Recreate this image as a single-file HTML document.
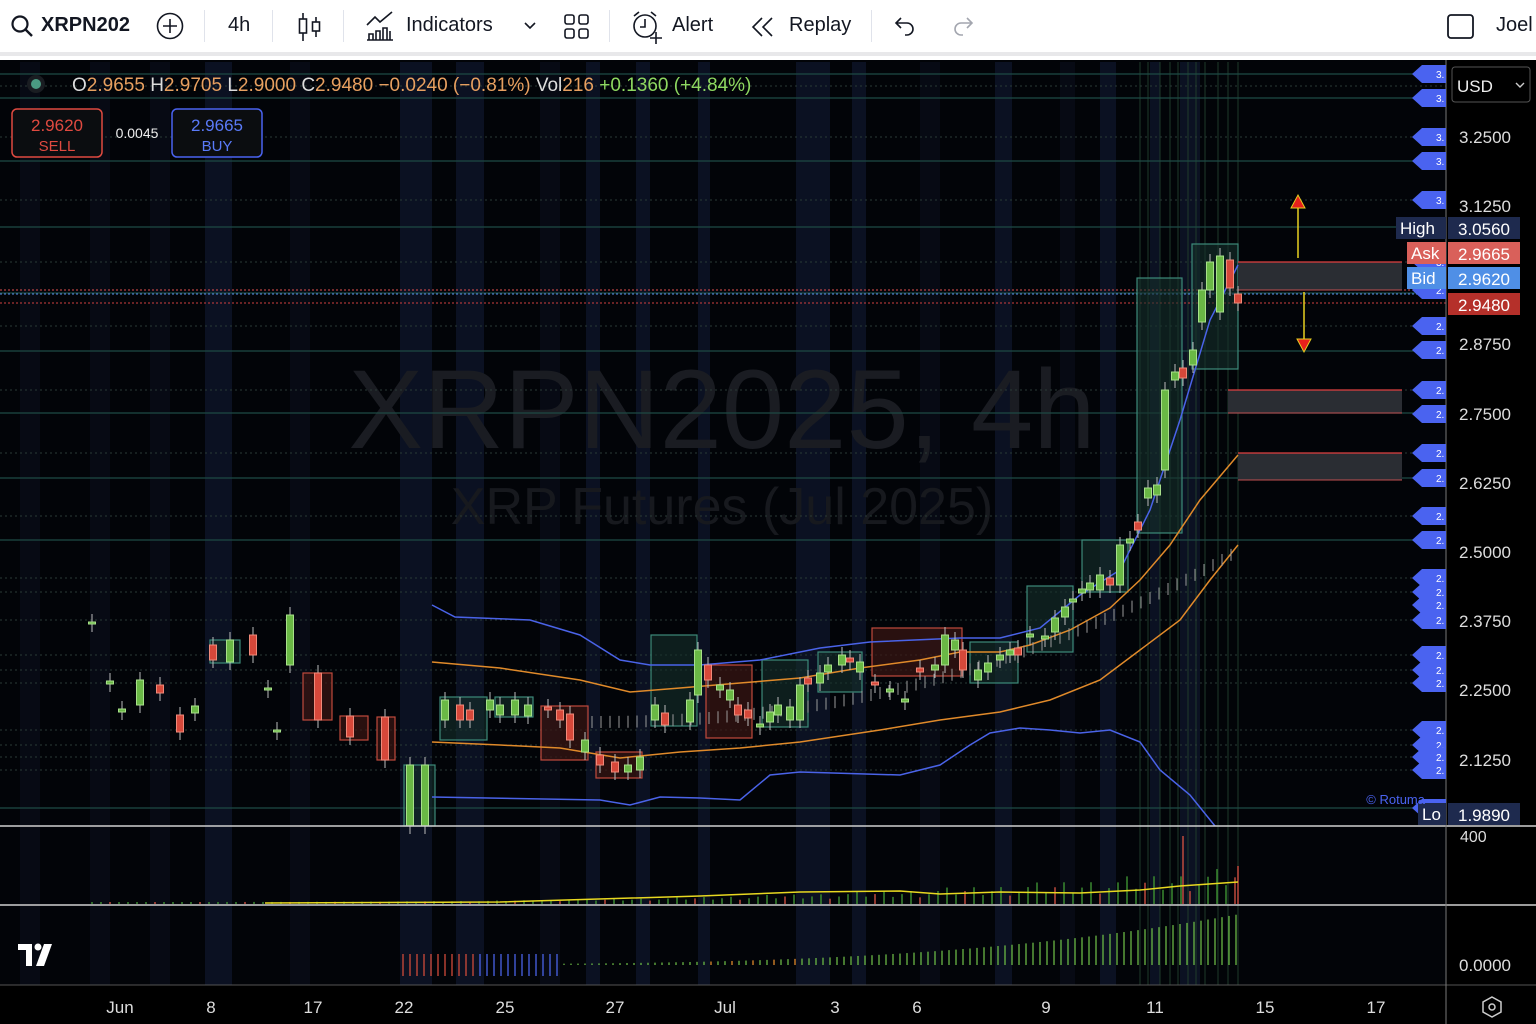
<!DOCTYPE html>
<html><head><meta charset="utf-8"><style>
*{margin:0;padding:0;box-sizing:border-box}
body{width:1536px;height:1024px;overflow:hidden;background:#fff;font-family:"Liberation Sans",sans-serif;position:relative}
.tb{position:absolute;left:0;top:0;width:1536px;height:56px;background:#fff;border-bottom:4px solid #e8e8ea}
.tb span{position:absolute;top:14px;font-size:20px;color:#131722}
.dv{position:absolute;top:10px;width:1px;height:32px;background:#e0e3eb}
#ch{position:absolute;left:0;top:60px}
.axl{font-family:"Liberation Sans",sans-serif}
</style></head><body>
<div class="tb">
<svg style="position:absolute;left:10px;top:14px" width="26" height="26" viewBox="0 0 26 26"><circle cx="10" cy="10" r="7.5" fill="none" stroke="#131722" stroke-width="2.2"/><path d="M15.5 15.5 22 22" stroke="#131722" stroke-width="2.4"/></svg>
<span style="left:41px;font-weight:bold">XRPN202</span>
<svg style="position:absolute;left:156px;top:12px" width="30" height="30"><circle cx="14" cy="14" r="12.5" fill="none" stroke="#131722" stroke-width="1.6"/><path d="M14 7v14M7 14h14" stroke="#131722" stroke-width="1.6"/></svg>
<div class="dv" style="left:204px"></div>
<span style="left:228px">4h</span>
<div class="dv" style="left:272px"></div>
<svg style="position:absolute;left:296px;top:11px" width="28" height="32"><path d="M7 2v28M20 6v20" stroke="#131722" stroke-width="1.6"/><rect x="3.5" y="8" width="7" height="14" fill="#fff" stroke="#131722" stroke-width="1.6"/><rect x="16.5" y="11" width="7" height="9" fill="#fff" stroke="#131722" stroke-width="1.6"/></svg>
<div class="dv" style="left:343px"></div>
<svg style="position:absolute;left:364px;top:11px" width="32" height="32"><path d="M3 14l8-8 5 5 12-10" fill="none" stroke="#131722" stroke-width="1.6"/><path d="M3 29h26M5 29v-6h4v6M12 29v-9h4v9M19 29v-12h4v12M26 29v-9" fill="none" stroke="#131722" stroke-width="1.6"/></svg>
<span style="left:406px">Indicators</span>
<svg style="position:absolute;left:523px;top:20px" width="14" height="12"><path d="M2 3l5 5 5-5" fill="none" stroke="#131722" stroke-width="1.6"/></svg>
<svg style="position:absolute;left:563px;top:13px" width="28" height="28"><rect x="2" y="2" width="9" height="9" rx="2" fill="none" stroke="#131722" stroke-width="1.6"/><rect x="16" y="2" width="9" height="9" rx="2" fill="none" stroke="#131722" stroke-width="1.6"/><rect x="2" y="16" width="9" height="9" rx="2" fill="none" stroke="#131722" stroke-width="1.6"/><rect x="16" y="16" width="9" height="9" rx="2" fill="none" stroke="#131722" stroke-width="1.6"/></svg>
<div class="dv" style="left:609px"></div>
<svg style="position:absolute;left:630px;top:10px" width="34" height="34"><circle cx="15" cy="16" r="11" fill="none" stroke="#131722" stroke-width="1.6"/><path d="M15 9v8h-5M4 6l5-4M26 6l-5-4M26 22v12M20 28h12" fill="none" stroke="#131722" stroke-width="1.6"/></svg>
<span style="left:672px">Alert</span>
<svg style="position:absolute;left:750px;top:15px" width="26" height="24"><path d="M12 3 3 12l9 9M22 3l-9 9 9 9" fill="none" stroke="#131722" stroke-width="1.6"/></svg>
<span style="left:789px">Replay</span>
<div class="dv" style="left:871px"></div>
<svg style="position:absolute;left:893px;top:14px" width="26" height="24"><path d="M8 4 3 9l5 5M3 9h11a6 6 0 0 1 0 12h-2" fill="none" stroke="#131722" stroke-width="1.6"/></svg>
<svg style="position:absolute;left:949px;top:14px" width="26" height="24"><path d="M18 4l5 5-5 5M23 9H12a6 6 0 0 0 0 12h2" fill="none" stroke="#a3a6af" stroke-width="1.6"/></svg>
<svg style="position:absolute;left:1446px;top:12px" width="30" height="30"><rect x="2" y="3" width="25" height="23" rx="3" fill="none" stroke="#131722" stroke-width="1.8"/></svg>
<span style="left:1496px">Joel</span>
</div>
<svg id="ch" width="1536" height="964" viewBox="0 60 1536 964" xmlns="http://www.w3.org/2000/svg"></svg>
<script>
const S=document.getElementById('ch');let h='';
const Y=p=>137+(3.25-p)/0.125*69.25;
h+='<rect x="0" y="60" width="1536" height="964" fill="#000"/>';
h+='<rect x="0" y="60" width="1446" height="925" fill="#020408"/>';
// bands
[[205,232],[400,432],[456,484],[586,600],[636,650],[698,710],[796,830],[852,866],[995,1012],[1100,1116],[1150,1160],[1180,1200]].forEach(b=>h+=`<rect x="${b[0]}" y="62" width="${b[1]-b[0]}" height="923" fill="#0b1122"/>`);
[[20,40],[90,110],[150,170],[290,310],[540,560],[920,940],[1060,1075]].forEach(b=>h+=`<rect x="${b[0]}" y="62" width="${b[1]-b[0]}" height="923" fill="#070a14"/>`);
// vertical green lines
[1140,1148,1160,1170,1178,1188,1196,1205,1218,1228,1238].forEach(x=>h+=`<line x1="${x}" y1="62" x2="${x}" y2="985" stroke="#1f3a2a" stroke-width="1"/>`);
// watermark
h+='<text x="722" y="448" font-size="112" fill="#1a1c22" text-anchor="middle" font-family="Liberation Sans">XRPN2025, 4h</text>';
h+='<text x="722" y="524" font-size="52" fill="#17191e" text-anchor="middle" font-family="Liberation Sans">XRP Futures (Jul 2025)</text>';
// horizontal lines
[74,98,161,227,293,351,413,478,540,808].forEach(y=>h+=`<line x1="0" y1="${y}" x2="1446" y2="${y}" stroke="#1e4a44" stroke-width="1.3"/>`);
[86,137,200,262,326,390,453,516,578,592,620,655,670,683,730,745,757,770].forEach(y=>h+=`<line x1="0" y1="${y}" x2="1446" y2="${y}" stroke="#2a3a36" stroke-width="1" stroke-dasharray="2 3"/>`);
h+='<line x1="0" y1="290" x2="1446" y2="290" stroke="#e05050" stroke-dasharray="2 2"/><line x1="0" y1="294" x2="1446" y2="294" stroke="#5a8ff0" stroke-dasharray="2 2"/><line x1="0" y1="303" x2="1446" y2="303" stroke="#d04040" stroke-dasharray="2 2"/>';
// boxes
const G=[[651,635,697,726],[762,660,808,727],[818,652,862,692],[970,642,1018,683],[1027,586,1073,652],[1082,540,1128,592],[1137,278,1182,533],[1192,244,1238,369],[440,697,487,740],[495,697,533,717],[210,640,240,663],[404,765,435,826]];
const R=[[706,665,752,738],[872,628,962,676],[541,706,588,760],[596,752,642,778],[303,673,332,720],[340,716,368,740],[377,717,395,760]];
G.forEach(b=>h+=`<rect x="${b[0]}" y="${b[1]}" width="${b[2]-b[0]}" height="${b[3]-b[1]}" fill="#16302b" fill-opacity=".6" stroke="#3d8a7a" stroke-width="1.2"/>`);
R.forEach(b=>h+=`<rect x="${b[0]}" y="${b[1]}" width="${b[2]-b[0]}" height="${b[3]-b[1]}" fill="#3a1512" fill-opacity=".7" stroke="#c04a3c" stroke-width="1.2"/>`);
// right zones
[[1238,262,1402,290],[1228,390,1402,413],[1238,453,1402,480]].forEach(b=>{h+=`<rect x="${b[0]}" y="${b[1]}" width="${b[2]-b[0]}" height="${b[3]-b[1]}" fill="#2a2d33"/><line x1="${b[0]}" y1="${b[1]}" x2="${b[2]}" y2="${b[1]}" stroke="#e04040" stroke-width="1.3"/><line x1="${b[0]}" y1="${b[3]}" x2="${b[2]}" y2="${b[3]}" stroke="#c05050" stroke-width="1"/>`;});
// arrows
h+='<line x1="1298" y1="258" x2="1298" y2="206" stroke="#e8d020" stroke-width="1.5"/><path d="M1291 208l7-13 7 13z" fill="#e8201c" stroke="#e8d020"/>';
h+='<line x1="1304" y1="292" x2="1304" y2="342" stroke="#e8d020" stroke-width="1.5"/><path d="M1297 339l7 13 7-13z" fill="#e8201c" stroke="#e8d020"/>';
// indicator lines
const pl=(pts,c,w)=>h+=`<polyline points="${pts.map(p=>p.join(',')).join(' ')}" fill="none" stroke="${c}" stroke-width="${w}"/>`;
pl([[432,605],[455,617],[530,620],[580,635],[620,660],[650,665],[700,665],[760,660],[820,648],[870,642],[960,638],[1000,638],[1040,628],[1080,595],[1120,570],[1150,510],[1180,420],[1210,320],[1238,265]],'#4a63e8',1.5);
pl([[432,797],[600,800],[630,805],[660,797],[700,798],[740,800],[770,775],[800,772],[900,775],[940,765],[970,745],[990,733],[1020,728],[1050,730],[1080,733],[1110,730],[1140,742],[1160,770],[1190,795],[1215,826]],'#4a63e8',1.5);
pl([[432,662],[500,668],[580,680],[630,692],[680,688],[740,683],[800,678],[860,668],[920,660],[960,652],[1000,652],[1030,645],[1070,630],[1110,608],[1140,580],[1170,545],[1200,500],[1238,455]],'#e08a2a',1.5);
pl([[432,742],[500,745],[560,748],[620,758],[680,752],[740,748],[800,742],[880,730],[940,720],[1000,712],[1050,700],[1100,680],[1140,650],[1180,620],[1210,580],[1238,545]],'#e08a2a',1.5);
for(let x=592;x<1236;x+=9){let t=(x-592)/644;let y=722-Math.pow(t,2.2)*170;h+=`<line x1="${x}" y1="${y-6}" x2="${x}" y2="${y+6}" stroke="#9a9a9a" stroke-width="1"/>`;}
// candles [x,top,bottom,green]
const C=[[92,622,624,1],[110,681,684,1],[122,709,712,1],[140,680,705,1],[160,685,693,0],[180,715,732,0],[195,706,713,1],[213,645,660,0],[230,640,662,1],[253,635,655,0],[268,688,690,1],[277,730,732,1],[290,615,665,1],[318,673,720,0],[350,716,737,0],[385,717,760,0],[410,765,826,1],[425,765,826,1],[445,700,720,1],[460,705,720,0],[470,710,720,0],[490,700,710,1],[500,705,715,1],[515,700,715,1],[528,705,716,1],[548,707,710,0],[560,710,720,0],[570,714,740,0],[585,740,752,1],[600,755,765,0],[615,762,772,0],[628,765,772,1],[640,757,770,1],[655,705,720,1],[665,713,725,0],[690,700,722,1],[698,650,695,1],[708,665,680,0],[720,685,690,1],[730,690,700,1],[738,705,715,0],[748,710,718,0],[760,724,727,1],[770,712,722,1],[778,705,715,1],[790,707,720,1],[800,685,720,1],[808,678,684,0],[820,673,683,1],[828,665,672,1],[842,655,665,1],[850,658,662,0],[860,662,672,1],[875,682,685,0],[890,689,692,1],[905,699,702,1],[920,668,672,0],[935,665,670,1],[945,635,665,1],[955,640,650,1],[963,650,670,0],[978,670,680,1],[988,663,672,1],[1000,655,660,1],[1010,650,655,1],[1018,648,655,0],[1030,634,637,1],[1045,636,639,1],[1055,618,632,1],[1065,607,617,1],[1073,599,602,1],[1082,589,593,1],[1090,583,590,1],[1100,575,590,1],[1110,578,585,0],[1120,545,585,1],[1130,539,543,1],[1138,522,530,0],[1148,488,498,1],[1157,485,495,1],[1165,390,470,1],[1175,372,380,1],[1183,368,378,0],[1193,350,365,1],[1202,290,322,1],[1210,262,290,1],[1220,256,312,1],[1230,260,288,0],[1238,294,303,0]];
C.forEach(c=>{let col=c[3]?'#6ab845':'#d6483a',ed=c[3]?'#a8e08a':'#f08a7a';h+=`<line x1="${c[0]}" y1="${c[1]-8}" x2="${c[0]}" y2="${c[2]+8}" stroke="#bbb" stroke-width="1"/><rect x="${c[0]-3.5}" y="${c[1]}" width="7" height="${Math.max(2,c[2]-c[1])}" fill="${col}" stroke="${ed}" stroke-width="1"/>`;});
// pane separators
h+='<line x1="0" y1="826" x2="1536" y2="826" stroke="#d0d0d0" stroke-width="1.5"/><line x1="0" y1="905" x2="1536" y2="905" stroke="#d0d0d0" stroke-width="1.5"/><line x1="0" y1="985" x2="1536" y2="985" stroke="#555" stroke-width="1"/><line x1="1446" y1="60" x2="1446" y2="1024" stroke="#777" stroke-width="1"/>';
// volume
for(let x=92;x<1240;x+=9){let t=(x-92)/1148;let hh=2+Math.pow(t,3)*25*(0.5+((x*7)%10)/10);if(x>790&&(x%27==0))hh+=30;let col=((x*13)%5==0)?'#c04a3c':'#3a8a30';h+=`<line x1="${x}" y1="${904-hh}" x2="${x}" y2="904" stroke="${col}" stroke-width="1.5"/>`;}
h+='<line x1="1183" y1="836" x2="1183" y2="904" stroke="#c04a3c" stroke-width="1.5"/><line x1="1238" y1="866" x2="1238" y2="904" stroke="#c04a3c" stroke-width="1.5"/>';
pl([[265,903],[500,902],[700,896],[800,892],[900,891],[940,894],[1000,892],[1080,893],[1140,890],[1180,886],[1238,882]],'#e8d820',1.5);
// oscillator
for(let x=403;x<1240;x+=7){let t=(x-403)/837;let hh,col;if(x<560){hh=11;col=x<480?'#d04a3a':'#4a63e8';h+=`<line x1="${x}" y1="965" x2="${x}" y2="${965+0}" />`;h+=`<line x1="${x}" y1="${965-hh}" x2="${x}" y2="976" stroke="${col}" stroke-width="1.3"/>`;continue;}hh=Math.pow(t,3)*50+1;col=(x>700&&x<800&&x%3==0)?'#e08a2a':'#6ab845';h+=`<line x1="${x}" y1="${965-hh}" x2="${x}" y2="965" stroke="${col}" stroke-width="1.3"/>`;}
// TV logo
h+='<path d="M18 944h14v22h-6v-16h-8z" fill="#fff"/><circle cx="38" cy="947" r="3.5" fill="#fff"/><path d="M44 944h8l-8 22h-8z" fill="#fff"/>';
// legend
h+='<circle cx="36" cy="84" r="9" fill="#1a1d22"/><circle cx="36" cy="84" r="5" fill="#4a9a82"/>';
h+='<text y="91" font-size="19" font-family="Liberation Sans"><tspan x="72" fill="#ddd">O</tspan><tspan fill="#e8a060">2.9655 </tspan><tspan fill="#ddd">H</tspan><tspan fill="#e8a060">2.9705 </tspan><tspan fill="#ddd">L</tspan><tspan fill="#e8a060">2.9000 </tspan><tspan fill="#ddd">C</tspan><tspan fill="#e8a060">2.9480 −0.0240 (−0.81%) </tspan><tspan fill="#ddd">Vol</tspan><tspan fill="#e8a060">216 </tspan><tspan fill="#8ed860">+0.1360 (+4.84%)</tspan></text>';
h+='<rect x="12" y="109" width="90" height="48" rx="5" fill="#0b0d10" stroke="#e04a40" stroke-width="1.5"/><text x="57" y="131" fill="#e04a40" font-size="17" text-anchor="middle">2.9620</text><text x="57" y="151" fill="#e04a40" font-size="15" text-anchor="middle">SELL</text>';
h+='<text x="137" y="138" fill="#eee" font-size="14" text-anchor="middle">0.0045</text>';
h+='<rect x="172" y="109" width="90" height="48" rx="5" fill="#0b0d10" stroke="#4a63f0" stroke-width="1.5"/><text x="217" y="131" fill="#5a7af8" font-size="17" text-anchor="middle">2.9665</text><text x="217" y="151" fill="#5a7af8" font-size="15" text-anchor="middle">BUY</text>';
// axis
h+='<rect x="1452" y="67" width="78" height="35" rx="3" fill="#000" stroke="#555"/><text x="1457" y="92" fill="#eee" font-size="17">USD</text><path d="M1516 83l4 4 4-4" fill="none" stroke="#ccc" stroke-width="1.4"/>';
[['3.2500',137],['3.1250',206],['2.8750',344],['2.7500',414],['2.6250',483],['2.5000',552],['2.3750',621],['2.2500',690],['2.1250',760]].forEach(l=>h+=`<text x="1459" y="${l[1]+6}" fill="#ddd" font-size="17">${l[0]}</text>`);
h+='<text x="1460" y="842" fill="#ddd" font-size="16">400</text><text x="1459" y="971" fill="#ddd" font-size="17">0.0000</text>';
// blue tags
[74,98,137,161,200,262,290,326,350,390,414,453,478,516,540,578,592,605,620,655,670,683,730,745,757,770,808].forEach(y=>h+=`<path d="M1412 ${y}l10-9h24v18h-24z" fill="#4a63f0"/><text x="1436" y="${y+4}" fill="#fff" font-size="10">${y<280?'3.':'2.'}</text>`);
const tag=(t,y,c,lab,lc)=>{h+=`<rect x="1448" y="${y-11}" width="72" height="22" fill="${c}"/><text x="1458" y="${y+7}" fill="#fff" font-size="17">${t}</text>`;if(lab)h+=`<rect x="${1446-lab.length*11-6}" y="${y-11}" width="${lab.length*11+6}" height="22" fill="${lc}"/><text x="${1446-lab.length*11-2}" y="${y+6}" fill="#fff" font-size="17">${lab}</text>`;};
tag('3.0560',228,'#1e2a4e','High','#1e2a4e');tag('2.9665',253,'#d9605a','Ask','#d9605a');tag('2.9620',278,'#4f8fe6','Bid','#4f8fe6');tag('2.9480',304,'#b5302a');tag('1.9890',814,'#1e2a4e','Lo','#1e2a4e');
h+='<text x="1425" y="804" fill="#4a63f0" font-size="13" text-anchor="end">© Rotuma</text>';
// time axis
h+='<rect x="0" y="986" width="1536" height="38" fill="#000"/>';
[['Jun',120],['8',211],['17',313],['22',404],['25',505],['27',615],['Jul',725],['3',835],['6',917],['9',1046],['11',1155],['15',1265],['17',1376]].forEach(l=>h+=`<text x="${l[1]}" y="1013" fill="#ddd" font-size="17" text-anchor="middle">${l[0]}</text>`);
h+='<line x1="1446" y1="986" x2="1446" y2="1024" stroke="#777"/><path d="M1492 997l9 5v10l-9 5-9-5v-10z" fill="none" stroke="#ccc" stroke-width="1.5"/><circle cx="1492" cy="1007" r="3" fill="none" stroke="#ccc" stroke-width="1.5"/>';
S.innerHTML=h;
</script>
</body></html>
